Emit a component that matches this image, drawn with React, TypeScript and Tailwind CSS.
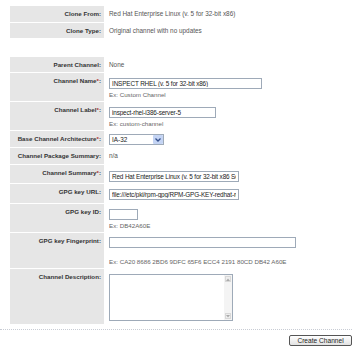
function Label({ text, req }: { text: string; req?: boolean }) {
  return (
    <div className="w-[94px] shrink-0 bg-[#e6e6e6] pr-[3px] pt-[4px] text-right text-[6.2px] leading-[8px] font-bold text-[#333]">
      {text}
      {req && <span className="text-[#b03030]">*</span>}:
    </div>
  );
}

function Row({
  text,
  req,
  h,
  children,
}: {
  text: string;
  req?: boolean;
  h: string;
  children: React.ReactNode;
}) {
  return (
    <div className={`flex border-b border-white ${h}`}>
      <Label text={text} req={req} />
      <div className="flex-1 pl-[5px] pt-[4px] text-[6.4px] leading-[8px] text-[#555]">{children}</div>
    </div>
  );
}

function TextBox({ value = "", w }: { value?: string; w: string }) {
  return (
    <input
      readOnly
      value={value}
      className={`block h-[11px] border border-[#9eaab8] bg-white px-[2px] text-[6.4px] leading-[9px] tracking-[-0.15px] text-[#222] outline-none ${w}`}
      style={{ fontFamily: "'Liberation Sans', Arial, sans-serif" }}
    />
  );
}

function Ex({ text, mt = "mt-[2px]" }: { text: string; mt?: string }) {
  return <div className={`${mt} text-[6.2px] leading-[8px] text-[#666]`}>{text}</div>;
}

export default function App() {
  return (
    <div
      className="h-[353px] w-[360px] overflow-hidden bg-white pt-[6px]"
      style={{ fontFamily: "'Liberation Sans', Arial, sans-serif" }}
    >
      {/* clone info */}
      <div className="ml-[10px] mr-[8px]">
        <Row text="Clone From" h="h-[17px]">
          Red Hat Enterprise Linux (v. 5 for 32-bit x86)
        </Row>
        <Row text="Clone Type" h="h-[16px]">
          Original channel with no updates
        </Row>
      </div>

      <div className="ml-[10px] mr-[8px] mt-[18px]">
        <Row text="Parent Channel" h="h-[16px]">
          None
        </Row>
        <Row text="Channel Name" req h="h-[29px]">
          <div className="pt-[1px]">
            <TextBox value="INSPECT RHEL (v. 5 for 32-bit x86)" w="w-[153px]" />
            <Ex text="Ex: Custom Channel" />
          </div>
        </Row>
        <Row text="Channel Label" req h="h-[29px]">
          <div className="pt-[1px]">
            <TextBox value="inspect-rhel-i386-server-5" w="w-[107px]" />
            <Ex text="Ex: custom-channel" />
          </div>
        </Row>
        <Row text="Base Channel Architecture" req h="h-[17px]">
          <div className="-mt-[1px] flex h-[11px] w-[55px] items-center border border-[#9eaab8] bg-white pl-[2px] text-[6.4px] text-[#222]">
            <span className="flex-1">IA-32</span>
            <span className="flex h-[9px] w-[10px] items-center justify-center rounded-[1px] bg-[#c4d4f4]">
              <svg width="6" height="4" viewBox="0 0 6 4">
                <path d="M0.5 0.5 L3 3 L5.5 0.5" fill="none" stroke="#34508c" strokeWidth="1.3" />
              </svg>
            </span>
          </div>
        </Row>
        <Row text="Channel Package Summary" h="h-[17px]">
          n/a
        </Row>
        <Row text="Channel Summary" req h="h-[19px]">
          <div className="pt-[2px]">
            <TextBox value="Red Hat Enterprise Linux (v. 5 for 32-bit x86 Server)" w="w-[130px]" />
          </div>
        </Row>
        <Row text="GPG key URL" h="h-[20px]">
          <div className="pt-[1px]">
            <TextBox value="file:///etc/pki/rpm-gpg/RPM-GPG-KEY-redhat-release" w="w-[130px]" />
          </div>
        </Row>
        <Row text="GPG key ID" h="h-[29px]">
          <div className="pt-[1px]">
            <TextBox w="w-[29px]" />
            <Ex text="Ex: DB42A60E" />
          </div>
        </Row>
        <Row text="GPG key Fingerprint" h="h-[36px]">
          <div>
            <TextBox w="w-[187px]" />
            <Ex text="Ex: CA20 8686 2BD6 9DFC 65F6 ECC4 2191 80CD DB42 A60E" mt="mt-[10px]" />
          </div>
        </Row>
        <div className="flex h-[55px]">
          <Label text="Channel Description" />
          <div className="flex-1 pl-[5px] pt-[5px]">
            <div className="flex h-[47px] w-[124px] border border-[#9eaab8] bg-white">
              <div className="flex-1" />
              <div className="flex w-[8px] flex-col justify-between bg-[#f4f4f4] p-[1px]">
                <div className="flex h-[6px] items-center justify-center border border-[#d8d8d8] bg-[#eee]">
                  <svg width="4" height="3" viewBox="0 0 4 3">
                    <path d="M0 3 L2 0.5 L4 3 Z" fill="#aaa" />
                  </svg>
                </div>
                <div className="flex h-[6px] items-center justify-center border border-[#d8d8d8] bg-[#eee]">
                  <svg width="4" height="3" viewBox="0 0 4 3">
                    <path d="M0 0 L2 2.5 L4 0 Z" fill="#aaa" />
                  </svg>
                </div>
              </div>
            </div>
          </div>
        </div>
      </div>

      <div className="mr-[8px] mt-[5px] border-t border-dotted border-[#c8ccd4]" />

      <div className="mr-[8px] mt-[5px] flex justify-end">
        <button className="h-[11px] w-[63px] rounded-[2px] border border-[#555] bg-gradient-to-b from-white to-[#e2e2e2] text-[6.6px] leading-[8px] text-[#222]">
          Create Channel
        </button>
      </div>
    </div>
  );
}
